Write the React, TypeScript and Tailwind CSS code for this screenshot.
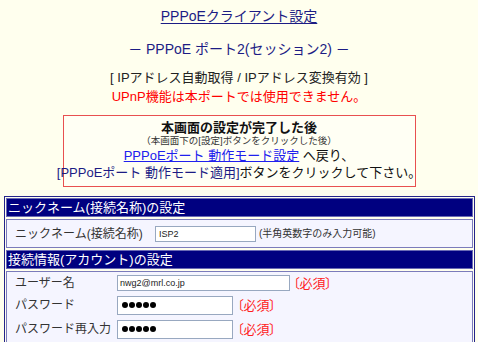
import React from "react";

const font = "font-['Liberation_Sans','Noto_Sans_CJK_JP',sans-serif]";

function Header({ children }: { children: React.ReactNode }) {
  return (
    <div className="h-[19px] bg-[#000080] border border-[#6a6ab4] text-white text-[13px] leading-[17px] pl-[1px] whitespace-nowrap">
      {children}
    </div>
  );
}

function Required() {
  return (
    <span className="text-[#ff2020] text-[13px] leading-[16px] whitespace-nowrap [font-feature-settings:'palt']">
      〔必須〕
    </span>
  );
}

function Dots() {
  return (
    <div className="w-[116px] h-[19px] bg-white border border-[#98a8c0] flex items-center pl-[4px] gap-[1px]">
      {[0, 1, 2, 3, 4].map((i) => (
        <span key={i} className="w-[6px] h-[6px] rounded-full bg-black" />
      ))}
    </div>
  );
}

export default function App() {
  return (
    <div className={`min-h-[342px] w-full bg-[#ffffee] ${font} overflow-hidden`}>
      <div className="flex flex-col items-center pt-[7px]">
        <div className="text-[14px] leading-[18px] text-[#1c1c84] underline underline-offset-2 whitespace-nowrap">
          PPPoEクライアント設定
        </div>
        <div className="mt-[15px] text-[14px] leading-[18px] text-[#1c1c84] whitespace-nowrap">
          － PPPoE ポート2(セッション2) －
        </div>
        <div className="mt-[12px] text-[13px] leading-[16px] text-[#222222] whitespace-nowrap">
          [ IPアドレス自動取得 / IPアドレス変換有効 ]
        </div>
        <div className="mt-[3px] text-[13px] leading-[16px] text-[#ff0000] whitespace-nowrap">
          UPnP機能は本ポートでは使用できません。
        </div>
        <div className="mt-[10px] w-[353px] h-[72px] border border-[#e85050] bg-[#fffff4] flex flex-col items-center pt-[5px]">
          <div className="text-[13px] leading-[13px] font-bold text-[#111111] whitespace-nowrap">本画面の設定が完了した後</div>
          <div className="text-[9.5px] leading-[13px] text-[#333333] whitespace-nowrap">（本画面下の[設定]ボタンをクリックした後）</div>
          <div className="text-[13px] leading-[17px] text-[#111111] whitespace-nowrap">
            <span className="text-[#2020ee] underline">PPPoEポート 動作モード設定</span> へ戻り、
          </div>
          <div className="text-[13px] leading-[18px] text-[#111111] whitespace-nowrap">
            <span className="text-[#1c1c84]">[PPPoEポート 動作モード適用]</span>ボタンをクリックして下さい。
          </div>
        </div>
      </div>

      <div className="mt-[9px] ml-[4px] w-[471px] border border-[#24248a] p-[1px] flex flex-col gap-[2px]">
        <Header>ニックネーム(接続名称)の設定</Header>
        <div className="h-[29px] bg-[#f5f5ff] border border-[#7b7bbb] flex items-center pl-[8px]">
          <span className="w-[140px] text-[12px] leading-[16px] text-[#333333] whitespace-nowrap">ニックネーム(接続名称)</span>
          <div className="w-[101px] h-[16px] bg-white border border-[#98a8c0] text-[9px] leading-[14px] pl-[3px] text-[#222222]">ISP2</div>
          <span className="ml-[3px] text-[10px] leading-[14px] text-[#333333] whitespace-nowrap">(半角英数字のみ入力可能)</span>
        </div>
        <Header>接続情報(アカウント)の設定</Header>
        <div className="h-[80px] bg-[#f5f5ff] border border-[#7b7bbb] border-b-0 pl-[8px] flex flex-col">
          <div className="h-[21px] flex items-center">
            <span className="w-[102px] text-[12px] leading-[16px] text-[#333333] whitespace-nowrap">ユーザー名</span>
            <div className="w-[173px] h-[16px] bg-white border border-[#98a8c0] text-[9px] leading-[14px] pl-[2px] text-[#222222]">nwg2@mrl.co.jp</div>
            <span className="ml-[3px]"><Required /></span>
          </div>
          <div className="h-[24px] flex items-center">
            <span className="w-[102px] text-[12px] leading-[16px] text-[#333333] whitespace-nowrap">パスワード</span>
            <Dots />
            <span className="ml-[4px]"><Required /></span>
          </div>
          <div className="h-[24px] flex items-center">
            <span className="w-[102px] text-[12px] leading-[16px] text-[#333333] whitespace-nowrap">パスワード再入力</span>
            <Dots />
            <span className="ml-[4px]"><Required /></span>
          </div>
        </div>
      </div>
    </div>
  );
}
